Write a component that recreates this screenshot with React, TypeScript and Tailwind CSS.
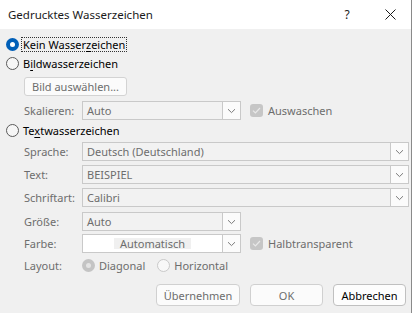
import React from 'react';

const font = { fontFamily: '"Segoe UI", "Noto Sans", "Open Sans", sans-serif' };

function Chevron() {
  return (
    <svg width="9" height="6" viewBox="0 0 9 6" className="text-[#7a7a7a]">
      <path d="M1 1.2 L4.5 4.6 L8 1.2" fill="none" stroke="currentColor" strokeWidth="1" />
    </svg>
  );
}

function Select({ value, wide, white, center }: { value: string; wide?: boolean; white?: boolean; center?: boolean }) {
  return (
    <div
      className={`flex h-[19px] ${wide ? 'w-[327px]' : 'w-[159px]'} border border-[#c9c9c9] ${white ? 'bg-white' : 'bg-[#f2f2f2]'}`}
    >
      <div className={`flex-1 flex items-center px-[4px] text-[#6d6d6d] ${center ? 'justify-center' : ''}`}>
        {white ? <span className="bg-[#f0f0f0] px-[6px]">{value}</span> : value}
      </div>
      <div className="w-[18px] border-l border-[#c9c9c9] bg-[#fbfbfb] flex items-center justify-center">
        <Chevron />
      </div>
    </div>
  );
}

function Check({ label }: { label: string }) {
  return (
    <div className="flex items-center gap-[5px] ml-[9px] text-[#6d6d6d]">
      <div className="w-[13px] h-[13px] rounded-[3px] bg-[#c6c6c6] flex items-center justify-center">
        <svg width="9" height="7" viewBox="0 0 9 7">
          <path d="M1 3.6 L3.4 6 L8 1" fill="none" stroke="#e9e9e9" strokeWidth="1.2" />
        </svg>
      </div>
      <span>{label}</span>
    </div>
  );
}

function Row({ label, children, className = '' }: { label: string; children: React.ReactNode; className?: string }) {
  return (
    <div className={`flex items-center h-[19px] pl-[24px] ${className}`}>
      <span className="w-[58px] text-[#6d6d6d]">{label}</span>
      {children}
    </div>
  );
}

export default function App() {
  return (
    <div className="flex w-[415px] h-[313px] bg-white text-[11px] leading-none" style={font}>
      <div className="w-[412px] h-full border-r border-[#8a8a8a] flex flex-col bg-[#f0f0f0]">
        {/* Title bar */}
        <div className="h-[29px] bg-white flex items-center pl-[8px] text-[#1a1a1a]">
          <span className="flex-1 text-[11.5px]">Gedrucktes Wasserzeichen</span>
          <span className="w-[20px] text-center mr-[28px] text-[12px]">?</span>
          <svg width="11" height="11" viewBox="0 0 11 11" className="mr-[15px]">
            <path d="M0.5 0.5 L10.5 10.5 M10.5 0.5 L0.5 10.5" stroke="#1a1a1a" strokeWidth="1" />
          </svg>
        </div>

        {/* Kein Wasserzeichen */}
        <div className="flex items-center h-[18px] mt-[6px] pl-[6px]">
          <div className="w-[13px] h-[13px] rounded-full bg-[#005fb8] flex items-center justify-center">
            <div className="w-[5px] h-[5px] rounded-full bg-white" />
          </div>
          <span className="ml-[2px] px-[1px] py-[1px] border border-dotted border-[#333] text-black">
            Kein Wasser<span className="underline underline-offset-2">z</span>eichen
          </span>
        </div>

        {/* Bildwasserzeichen */}
        <div className="flex items-center h-[18px] mt-[1px] pl-[6px]">
          <div className="w-[13px] h-[13px] rounded-full border border-[#5a5a5a] bg-[#f6f6f6]" />
          <span className="ml-[4px] text-black">
            B<span className="underline underline-offset-2">i</span>ldwasserzeichen
          </span>
        </div>

        <div className="pl-[24px] mt-[5px]">
          <div className="w-[103px] h-[19px] rounded-[3px] border border-[#d3d3d3] bg-[#fbfbfb] flex items-center justify-center text-[#6d6d6d]">
            Bild auswählen...
          </div>
        </div>

        <Row label="Skalieren:" className="mt-[5px]">
          <Select value="Auto" />
          <Check label="Auswaschen" />
        </Row>

        {/* Textwasserzeichen */}
        <div className="flex items-center h-[18px] mt-[1px] pl-[6px]">
          <div className="w-[13px] h-[13px] rounded-full border border-[#5a5a5a] bg-[#f6f6f6]" />
          <span className="ml-[4px] text-black">
            Te<span className="underline underline-offset-2">x</span>twasserzeichen
          </span>
        </div>

        <Row label="Sprache:" className="mt-[3px]">
          <Select value="Deutsch (Deutschland)" wide />
        </Row>
        <Row label="Text:" className="mt-[4px]">
          <Select value="BEISPIEL" wide />
        </Row>
        <Row label="Schriftart:" className="mt-[4px]">
          <Select value="Calibri" wide />
        </Row>
        <Row label="Größe:" className="mt-[5px]">
          <Select value="Auto" />
        </Row>
        <Row label="Farbe:" className="mt-[3px]">
          <Select value="Automatisch" white center />
          <Check label="Halbtransparent" />
        </Row>

        {/* Layout */}
        <div className="flex items-center h-[18px] mt-[3px] pl-[24px] text-[#6d6d6d]">
          <span className="w-[58px]">Layout:</span>
          <div className="w-[13px] h-[13px] rounded-full bg-[#c4c4c4] flex items-center justify-center">
            <div className="w-[5px] h-[5px] rounded-full bg-[#e4e4e4]" />
          </div>
          <span className="ml-[4px]">Diagonal</span>
          <div className="ml-[12px] w-[13px] h-[13px] rounded-full border border-[#c9c9c9] bg-[#f8f8f8]" />
          <span className="ml-[4px]">Horizontal</span>
        </div>

        {/* Buttons */}
        <div className="flex justify-end gap-[10px] mt-[10px] pr-[5px]">
          <div className="w-[84px] h-[22px] rounded-[4px] border border-[#d0d0d0] bg-[#fbfbfb] flex items-center justify-center text-[#6d6d6d]">
            Übernehmen
          </div>
          <div className="w-[73px] h-[22px] rounded-[4px] border border-[#d0d0d0] bg-[#fbfbfb] flex items-center justify-center text-[#6d6d6d]">
            OK
          </div>
          <div className="w-[73px] h-[22px] rounded-[4px] border border-[#c0c0c0] bg-[#fdfdfd] flex items-center justify-center text-black">
            Abbrechen
          </div>
        </div>
      </div>
    </div>
  );
}
